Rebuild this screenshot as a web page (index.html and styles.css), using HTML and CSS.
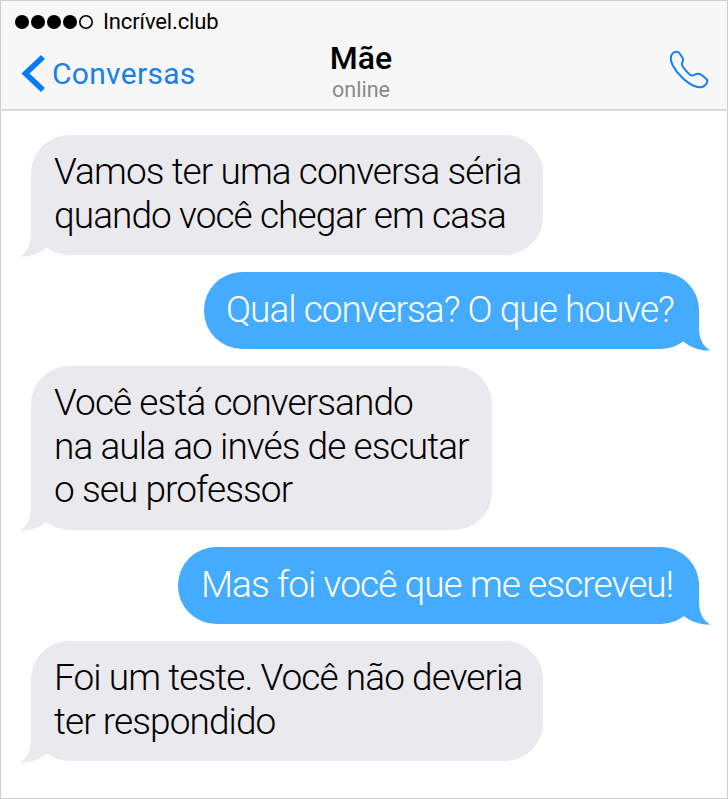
FILE: index.html
```
<!DOCTYPE html>
<html lang="pt">
<head>
    <meta charset="UTF-8">
    <meta name="viewport" content="width=device-width, initial-scale=1.0">
    <title>Mãe</title>
    <link rel="stylesheet" href="styles.css">
</head>
<body>
    <div class="phone">
        <header class="header">
            <div class="left">
                <div class="status">
                    <svg class="signal" width="79" height="16" viewBox="0 0 79 16">
                        <circle cx="7" cy="8" r="7"/>
                        <circle cx="23" cy="8" r="7"/>
                        <circle cx="39" cy="8" r="7"/>
                        <circle cx="55" cy="8" r="7"/>
                        <circle class="empty" cx="71" cy="8" r="6.2"/>
                    </svg>
                    <span class="carrier">Incrível.club</span>
                </div>
                <div class="back">
                    <svg width="25" height="39" viewBox="0 0 25 39">
                        <path d="M22 3L4.500 19.500L22 36"/>
                    </svg>
                    <span class="back-label">Conversas</span>
                </div>
            </div>
            <div class="contact">
                <div class="name">Mãe</div>
                <div class="state">online</div>
            </div>
            <div class="call">
                <svg width="40" height="40" viewBox="0 0 40 40">
                    <path d="M4 3C6 1.300 9 1.300 10.300 3L13.700 8C15.200 10.500 12.700 11.500 13 14.500C13.300 17 19.500 24 22 25.300C24.500 26.300 25.500 23.800 29 23.800C30.500 23.800 31.500 24.300 32.500 25L37 28.500C39 30.300 38.600 32 37.300 33.800C35 37.300 30.500 38 26 36.300C17.500 33 7.500 23 3.500 15C1.500 10.500 1.300 5.500 4 3Z"/>
                </svg>
            </div>
        </header>

        <main class="chat">
            <div class="bubble in wide">
                Vamos ter uma conversa séria<br>quando você chegar em casa
                <svg class="tail" width="32" height="44" viewBox="0 0 32 44"><path d="M12 0V20C12 32 8.500 39 0.500 43.500C10 44 19 41 26.500 35.500L30 32V20Z"/></svg>
            </div>
            <div class="bubble out first">
                Qual conversa? O que houve?
                <svg class="tail" width="32" height="44" viewBox="0 0 32 44"><path d="M12 0V20C12 32 8.500 39 0.500 43.500C10 44 19 41 26.500 35.500L30 32V20Z"/></svg>
            </div>
            <div class="bubble in medium">
                Você está conversando<br>na aula ao invés de escutar<br>o seu professor
                <svg class="tail" width="32" height="44" viewBox="0 0 32 44"><path d="M12 0V20C12 32 8.500 39 0.500 43.500C10 44 19 41 26.500 35.500L30 32V20Z"/></svg>
            </div>
            <div class="bubble out second">
                Mas foi você que me escreveu!
                <svg class="tail" width="32" height="44" viewBox="0 0 32 44"><path d="M12 0V20C12 32 8.500 39 0.500 43.500C10 44 19 41 26.500 35.500L30 32V20Z"/></svg>
            </div>
            <div class="bubble in wide">
                Foi um teste. Você não deveria<br>ter respondido
                <svg class="tail" width="32" height="44" viewBox="0 0 32 44"><path d="M12 0V20C12 32 8.500 39 0.500 43.500C10 44 19 41 26.500 35.500L30 32V20Z"/></svg>
            </div>
        </main>
    </div>
</body>
</html>
```
FILE: styles.css
```
* {
    box-sizing: border-box;
}
body {
    margin: 0;
    font-family: Roboto, sans-serif;
    background-color: #fff;
}
.phone {
    width: 728px;
    height: 799px;
    border: 1px solid #cfcfcf;
    overflow: hidden;
}
.header {
    display: grid;
    grid-template-columns: 260px 200px 1fr;
    height: 110px;
    background-color: #f7f7f7;
    border-bottom: 2px solid #dadada;
}
.status {
    display: flex;
    align-items: center;
    height: 26px;
    margin-top: 8px;
    padding-left: 14px;
}
.signal .empty {
    fill: none;
    stroke: #000;
    stroke-width: 1.6;
}
.carrier {
    margin-left: 9px;
    font-size: 22px;
    line-height: 26px;
    letter-spacing: -0.13px;
}
.back {
    display: flex;
    align-items: center;
    height: 39px;
    margin-top: 19px;
    padding-left: 20px;
    color: #1a7fe8;
}
.back path {
    fill: none;
    stroke: #007aff;
    stroke-width: 5.6;
}
.back-label {
    margin-left: 6px;
    padding-top: 1px;
    font-size: 30px;
    line-height: 38px;
    letter-spacing: 0.3px;
}
.contact {
    padding-top: 38px;
    text-align: center;
}
.name {
    font-size: 32px;
    font-weight: 500;
    line-height: 38px;
}
.state {
    font-size: 21.5px;
    line-height: 26px;
    color: #8a8a8a;
}
.call {
    display: flex;
    justify-content: flex-end;
    padding: 49px 18px 0 0;
}
.call path {
    fill: none;
    stroke: #157efb;
    stroke-width: 2;
    stroke-linejoin: round;
}
.chat {
    display: flex;
    flex-direction: column;
    gap: 17.2px;
    padding: 24px 28px 0 30px;
}
.bubble {
    position: relative;
    padding: 15px 23px 18.2px;
    border-radius: 38px;
    font-size: 37px;
    font-weight: 300;
    line-height: 43.5px;
    letter-spacing: -0.92px;
    white-space: nowrap;
}
.in {
    align-self: flex-start;
    background-color: #eae9ee;
    color: #000;
}
.out {
    align-self: flex-end;
    padding-top: 16px;
    padding-bottom: 17.2px;
    background-color: #45abfe;
    color: #fff;
}
.wide {
    width: 512px;
}
.medium {
    width: 461px;
}
.first {
    width: 495px;
    padding-left: 22px;
    letter-spacing: -0.98px;
}
.second {
    width: 521px;
}
.tail {
    position: absolute;
    bottom: -1.5px;
    left: -12px;
}
.in .tail {
    fill: #eae9ee;
}
.out .tail {
    left: auto;
    right: -12px;
    transform: scaleX(-1);
    fill: #45abfe;
}
```
